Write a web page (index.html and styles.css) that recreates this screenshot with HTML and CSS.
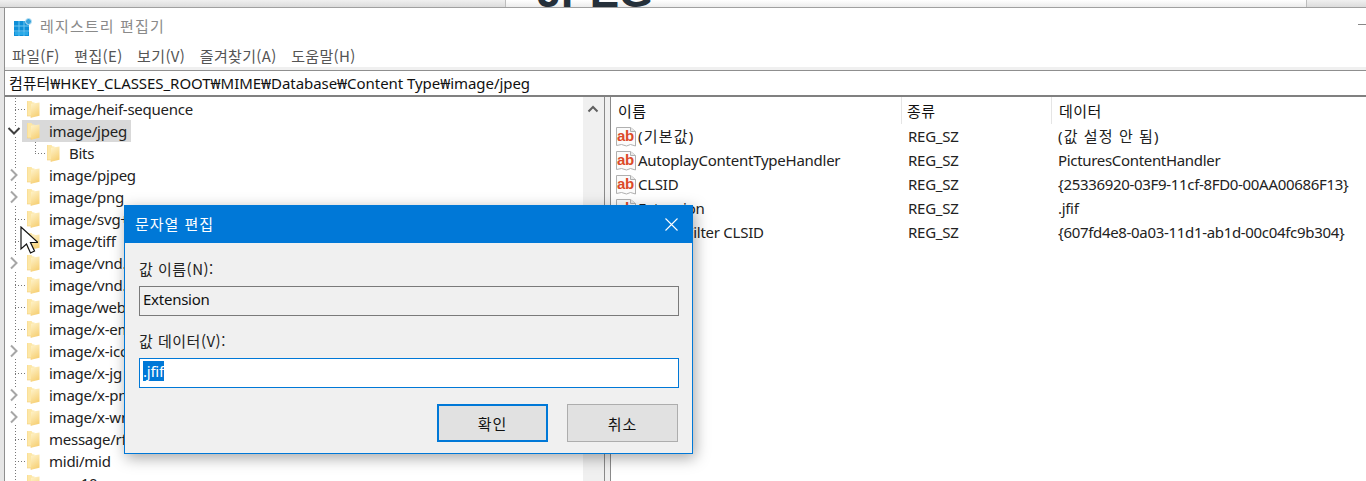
FILE: index.html
```html
<!DOCTYPE html>
<html lang="ko">
<head>
<meta charset="utf-8">
<title>레지스트리 편집기</title>
<link rel="stylesheet" href="styles.css">
</head>
<body>
<svg class="defs" width="0" height="0" aria-hidden="true">
  <defs>
    <linearGradient id="fg" x1="0" y1="0" x2="0.4" y2="1">
      <stop offset="0" stop-color="#fff4cd"/><stop offset="1" stop-color="#f7d27a"/>
    </linearGradient>
    <symbol id="folder" viewBox="0 0 13 17">
      <path d="M0 0h4.500l1 1.500h2v13l-3 .5h-4.500z" fill="#fde7a6"/>
      <path d="M4 3l8.500-1.200v13.200l-8.500 2z" fill="url(#fg)" transform="translate(0 -.3)"/>
      <path d="M0 0v15h4v2" fill="none" stroke="#f3cf7a" stroke-width=".6"/>
    </symbol>
    <symbol id="ab" viewBox="0 0 20 21">
      <path d="M.5 1.500h14l5 4v14.500l-5-1.500-4 1.500-5-1.500-5 1z" fill="#fbfbfb" stroke="#b0b0b0"/>
      <path d="M14.500 1.500v4h5" fill="#e9e9e9" stroke="#b0b0b0"/>
      <text x="1" y="14.500" class="ab-text">ab</text>
    </symbol>
    <symbol id="chev" viewBox="0 0 10 14">
      <path d="M2 1.500l5.500 5.500-5.500 5.500" fill="none" stroke="#a6a6a6" stroke-width="2"/>
    </symbol>
  </defs>
</svg>

<div class="backdrop">
  <div class="back-tab"></div>
  <div class="back-doc"><span class="jpeg">JPEG</span></div>
  <div class="back-tab-end"></div>
</div>

<div class="window">
  <header class="titlebar">
    <svg class="app-icon" viewBox="0 0 18 18" width="18" height="18">
      <rect x="0" y="3" width="15" height="15" fill="#0f8fd8"/>
      <path d="M5 3v15M10 3v15M0 8h15M0 13h15" stroke="#6fc6f0" stroke-width="1"/>
      <rect x="1" y="14" width="13" height="3" fill="#34b4ee" opacity=".7"/>
      <circle cx="14.500" cy="3.500" r="3" fill="#3aa4dc" stroke="#bfe3f5"/>
    </svg>
    <span class="title">레지스트리 편집기</span>
    <span class="minimize"></span>
  </header>
  <nav class="menubar">
    <span>파일(F)</span><span>편집(E)</span><span>보기(V)</span><span>즐겨찾기(A)</span><span>도움말(H)</span>
  </nav>
  <div class="address">컴퓨터₩HKEY_CLASSES_ROOT₩MIME₩Database₩Content Type₩image/jpeg</div>
  <main class="panes">
    <section class="tree">
      <div class="tree-list">
        <div class="row"><span class="twig"></span><svg class="folder"><use href="#folder"/></svg><span class="label">image/heif-sequence</span></div>
        <div class="row"><svg class="open" viewBox="0 0 14 10"><path d="M1.500 2l5.500 5.500 5.500-5.500" fill="none" stroke="#404040" stroke-width="2"/></svg><span class="sel"><svg class="folder"><use href="#folder"/></svg><span class="label">image/jpeg</span></span></div>
        <div class="row child"><span class="twig"></span><svg class="folder"><use href="#folder"/></svg><span class="label">Bits</span></div>
        <div class="row"><svg class="chev"><use href="#chev"/></svg><svg class="folder"><use href="#folder"/></svg><span class="label">image/pjpeg</span></div>
        <div class="row"><svg class="chev"><use href="#chev"/></svg><svg class="folder"><use href="#folder"/></svg><span class="label">image/png</span></div>
        <div class="row"><span class="twig"></span><svg class="folder"><use href="#folder"/></svg><span class="label">image/svg+xml</span></div>
        <div class="row"><span class="twig"></span><svg class="folder"><use href="#folder"/></svg><span class="label">image/tiff</span></div>
        <div class="row"><svg class="chev"><use href="#chev"/></svg><svg class="folder"><use href="#folder"/></svg><span class="label">image/vnd.ms-photo</span></div>
        <div class="row"><span class="twig"></span><svg class="folder"><use href="#folder"/></svg><span class="label">image/vnd.wap.wbmp</span></div>
        <div class="row"><span class="twig"></span><svg class="folder"><use href="#folder"/></svg><span class="label">image/webp</span></div>
        <div class="row"><span class="twig"></span><svg class="folder"><use href="#folder"/></svg><span class="label">image/x-emf</span></div>
        <div class="row"><svg class="chev"><use href="#chev"/></svg><svg class="folder"><use href="#folder"/></svg><span class="label">image/x-icon</span></div>
        <div class="row"><span class="twig"></span><svg class="folder"><use href="#folder"/></svg><span class="label">image/x-jg</span></div>
        <div class="row"><svg class="chev"><use href="#chev"/></svg><svg class="folder"><use href="#folder"/></svg><span class="label">image/x-png</span></div>
        <div class="row"><svg class="chev"><use href="#chev"/></svg><svg class="folder"><use href="#folder"/></svg><span class="label">image/x-wmf</span></div>
        <div class="row"><span class="twig"></span><svg class="folder"><use href="#folder"/></svg><span class="label">message/rfc822</span></div>
        <div class="row"><span class="twig"></span><svg class="folder"><use href="#folder"/></svg><span class="label">midi/mid</span></div>
        <div class="row"><span class="twig"></span><svg class="folder"><use href="#folder"/></svg><span class="label">mxc 10</span></div>
      </div>
      <div class="scrollbar"><svg class="up" viewBox="0 0 12 8"><path d="M1.500 6.500l4.500-4.500 4.500 4.500" fill="none" stroke="#606060" stroke-width="2"/></svg></div>
    </section>
    <div class="splitter"></div>
    <section class="values">
      <div class="vhead"><span class="c-name">이름</span><span class="c-type">종류</span><span class="c-data">데이터</span></div>
      <div class="vrow"><span class="c-name"><svg class="ab"><use href="#ab"/></svg><span class="ko">(기본값)</span></span><span class="c-type">REG_SZ</span><span class="c-data"><span class="ko">(값 설정 안 됨)</span></span></div>
      <div class="vrow"><span class="c-name"><svg class="ab"><use href="#ab"/></svg>AutoplayContentTypeHandler</span><span class="c-type">REG_SZ</span><span class="c-data">PicturesContentHandler</span></div>
      <div class="vrow"><span class="c-name"><svg class="ab"><use href="#ab"/></svg>CLSID</span><span class="c-type">REG_SZ</span><span class="c-data">{25336920-03F9-11cf-8FD0-00AA00686F13}</span></div>
      <div class="vrow"><span class="c-name"><svg class="ab"><use href="#ab"/></svg>Extension</span><span class="c-type">REG_SZ</span><span class="c-data">.jfif</span></div>
      <div class="vrow"><span class="c-name"><svg class="ab"><use href="#ab"/></svg>Image Filter CLSID</span><span class="c-type">REG_SZ</span><span class="c-data">{607fd4e8-0a03-11d1-ab1d-00c04fc9b304}</span></div>
    </section>
  </main>
</div>

<svg class="cursor" viewBox="0 0 18 28" width="18" height="28">
  <path d="M1 1v22l5.500-5 4 9 4-2-4-8.500h7.500z" fill="#fff" stroke="#111" stroke-width="1.200"/>
</svg>

<div class="dialog">
  <div class="dlg-title">
    <span class="dlg-name">문자열 편집</span>
    <svg class="dlg-close" viewBox="0 0 13 13" width="13" height="13"><path d="M.5.500l12 12M12.500.500l-12 12" stroke="#fff" stroke-width="1.100"/></svg>
  </div>
  <div class="dlg-body">
    <label class="dlg-label">값 이름(N):</label>
    <div class="field field-ro">Extension</div>
    <label class="dlg-label lbl2">값 데이터(V):</label>
    <div class="field field-on"><span class="selected">.jfif</span></div>
    <div class="dlg-buttons">
      <button class="btn btn-default">확인</button>
      <button class="btn">취소</button>
    </div>
  </div>
</div>
</body>
</html>
```
FILE: styles.css
```css
* { box-sizing: border-box; }
html, body { margin: 0; height: 481px; overflow: hidden; }
body {
  position: relative;
  background: #e6e6e6;
  color: #111;
  font: 15px/22px "Noto Sans", "Noto Sans CJK KR", sans-serif;
}
.defs { position: absolute; }
.ab-text { font: bold 15px "Liberation Sans", sans-serif; fill: #dc4a2a; }

.backdrop {
  height: 8px;
  display: flex;
  overflow: hidden;
  background: linear-gradient(#f0f0f0, #dcdcdc);
  border-bottom: 1px solid #a0a0a0;
}
.back-tab { width: 506px; border-right: 1px solid #bdbdbd; }
.back-doc { width: 800px; height: 7px; background: linear-gradient(#fff, #ececec); overflow: hidden; }
.back-tab-end { flex: 1; border-left: 1px solid #bdbdbd; }
.jpeg {
  display: block;
  margin: -28px 0 0 31px;
  font: 700 44px/40px "Liberation Sans", sans-serif;
  color: #25303a;
  letter-spacing: -.5px;
}

.window {
  margin-left: 4px;
  height: 473px;
  background: #fff;
  border-left: 1px solid #8f8f8f;
  display: flex;
  flex-direction: column;
}
.titlebar { height: 36px; display: flex; align-items: center; padding-left: 9px; }
.app-icon { margin-top: 1px; }
.title {
  margin-left: 8px;
  font-family: "Noto Sans CJK KR", sans-serif;
  letter-spacing: 1.15px;
  color: #8a8a8a;
}
.minimize { margin-left: auto; margin-top: -3px; width: 8px; height: 1px; background: #888; }

.menubar {
  height: 24px;
  display: flex;
  gap: 14.5px;
  padding-left: 7px;
  align-items: center;
  font: 15px/22px "Noto Sans CJK KR", "Noto Sans", sans-serif;
  letter-spacing: .35px;
  color: #555;
}

.address {
  margin-top: 2px;
  height: 27px;
  padding: 1px 0 0 4px;
  background: #fff;
  border-top: 1px solid #8f8f8f;
  border-bottom: 2px solid #808080;
  box-shadow: 0 -3px 0 #f0f0f0;
  white-space: nowrap;
  letter-spacing: -.05px;
}

.panes { flex: 1; display: flex; min-height: 0; }

.tree { width: 599px; display: flex; overflow: hidden; padding-top: 1px; }
.tree-list {
  width: 578px;
  overflow: hidden;
  background: repeating-linear-gradient(#777 0 1px, transparent 1px 3px) 10px 0 / 1px 100% no-repeat;
}
.row { height: 22px; display: flex; align-items: center; position: relative; padding-left: 22px; white-space: nowrap; }
.row.child { padding-left: 42px; }
.folder { width: 13px; height: 17px; flex: none; margin-right: 9px; }
.sel { display: flex; align-items: center; height: 22px; width: 109px; margin-left: -5px; padding-left: 5px; background: #d9d9d9; }
.twig {
  position: absolute;
  left: 10px; top: 11px;
  width: 11px; height: 1px;
  background: repeating-linear-gradient(90deg, #777 0 1px, transparent 1px 3px);
}
.child .twig {
  left: 30px; top: 0;
  height: 12px;
  background:
    repeating-linear-gradient(#777 0 1px, transparent 1px 3px) 0 0 / 1px 100% no-repeat,
    repeating-linear-gradient(90deg, #777 0 1px, transparent 1px 3px) 0 11px / 100% 1px no-repeat;
}
.chev { position: absolute; left: 4px; top: 4px; width: 10px; height: 14px; background: #fff; }
.open { position: absolute; left: 2px; top: 6px; width: 14px; height: 10px; background: #fff; }
.label { letter-spacing: -.25px; color: #222; }

.scrollbar { width: 21px; background: #f0f0f0; padding: 8px 0 0 4px; margin-top: -1px; }
.up { display: block; width: 12px; height: 8px; }

.splitter { width: 7px; background: #f0f0f0; border-left: 1px solid #8a8a8a; border-right: 1px solid #8a8a8a; }

.values { flex: 1; overflow: hidden; }
.vhead, .vrow { display: grid; grid-template-columns: 291px 150px 1fr; }
.vhead { height: 27px; align-items: start; }
.vhead span { padding-left: 7px; height: 27px; line-height: 28px; border-right: 1px solid #e5e5e5; font-family: "Noto Sans CJK KR", sans-serif; letter-spacing: .4px; }
.vhead .c-type { padding-left: 5px; }
.vhead .c-data { border: 0; padding-left: 7px; }
.vrow { height: 24px; align-items: center; letter-spacing: -.32px; white-space: nowrap; color: #222; }
.vrow .c-name { display: flex; align-items: center; padding-left: 5px; letter-spacing: -.25px; }
.vrow .c-type { padding-left: 6px; letter-spacing: -.25px; }
.vrow .c-data { padding-left: 6px; }
.vrow .ko { letter-spacing: 1.2px; }
.ab { width: 20px; height: 21px; margin-right: 2px; flex: none; }

.cursor { position: absolute; left: 20px; top: 226px; }

.dialog {
  position: absolute;
  left: 124px; top: 205px;
  width: 569px; height: 249px;
  background: #f0f0f0;
  border: 1px solid #0078d7;
  box-shadow: 2px 4px 14px rgba(0,0,0,.35);
}
.dlg-title {
  height: 37px;
  background: #0078d7;
  color: #fff;
  display: flex;
  align-items: center;
  justify-content: space-between;
  padding: 0 14px 0 10px;
  font-family: "Noto Sans CJK KR", sans-serif;
  letter-spacing: .95px;
}
.dlg-name { margin-top: -2px; }
.dlg-body { padding: 15px 13px 0 14px; }
.dlg-label { display: block; height: 22px; line-height: 22px; font-family: "Noto Sans CJK KR", sans-serif; color: #222; letter-spacing: .5px; }
.lbl2 { margin-top: 14px; }
.field { height: 30px; margin-top: 6px; padding: 2px 3px; border: 1px solid #7a7a7a; background: #f0f0f0; letter-spacing: -.25px; line-height: 20px; }
.field-ro { padding-top: 2px; line-height: 21px; }
.field-on { border-color: #0078d7; background: #fff; }
.selected { display: block; width: fit-content; height: 20px; background: #0078d7; color: #fff; }
.dlg-buttons { display: flex; gap: 19px; margin-top: 16px; padding-left: 298px; }
.btn {
  width: 111px; height: 38px;
  padding: 0;
  background: #e1e1e1;
  border: 1px solid #adadad;
  color: #111;
  font: 15px "Noto Sans CJK KR", sans-serif;
  letter-spacing: 1px;
}
.btn-default { border: 2px solid #0078d7; }
```
